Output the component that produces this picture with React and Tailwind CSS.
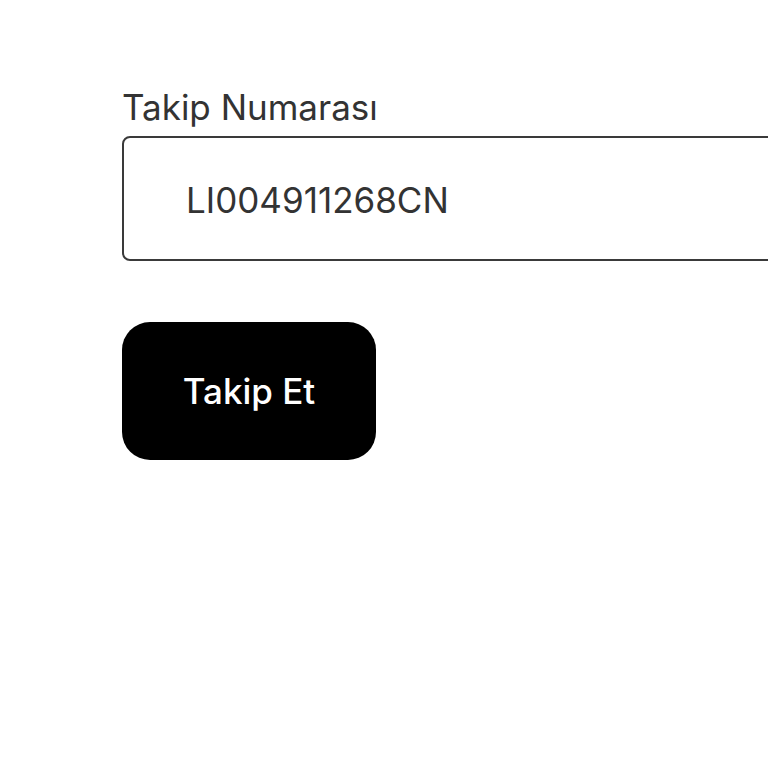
export default function App() {
  return (
    <div className="w-[768px] h-[768px] overflow-hidden bg-white font-['Inter',sans-serif]">
      <div className="pl-[122px] pt-[86px] w-[1000px]">
        <label className="block text-[35px] leading-[42px] text-[#333]">Takip Numarası</label>
        <div className="mt-[8px] w-[700px] h-[125px] border-2 border-[#3a3a3a] rounded-[8px] flex items-center pl-[62px]">
          <span className="text-[35px] text-[#333] pt-[3px]">LI004911268CN</span>
        </div>
        <button className="mt-[61px] w-[254px] h-[138px] bg-black rounded-[28px] text-white text-[35px] font-medium flex items-center justify-center">
          Takip Et
        </button>
      </div>
    </div>
  )
}
